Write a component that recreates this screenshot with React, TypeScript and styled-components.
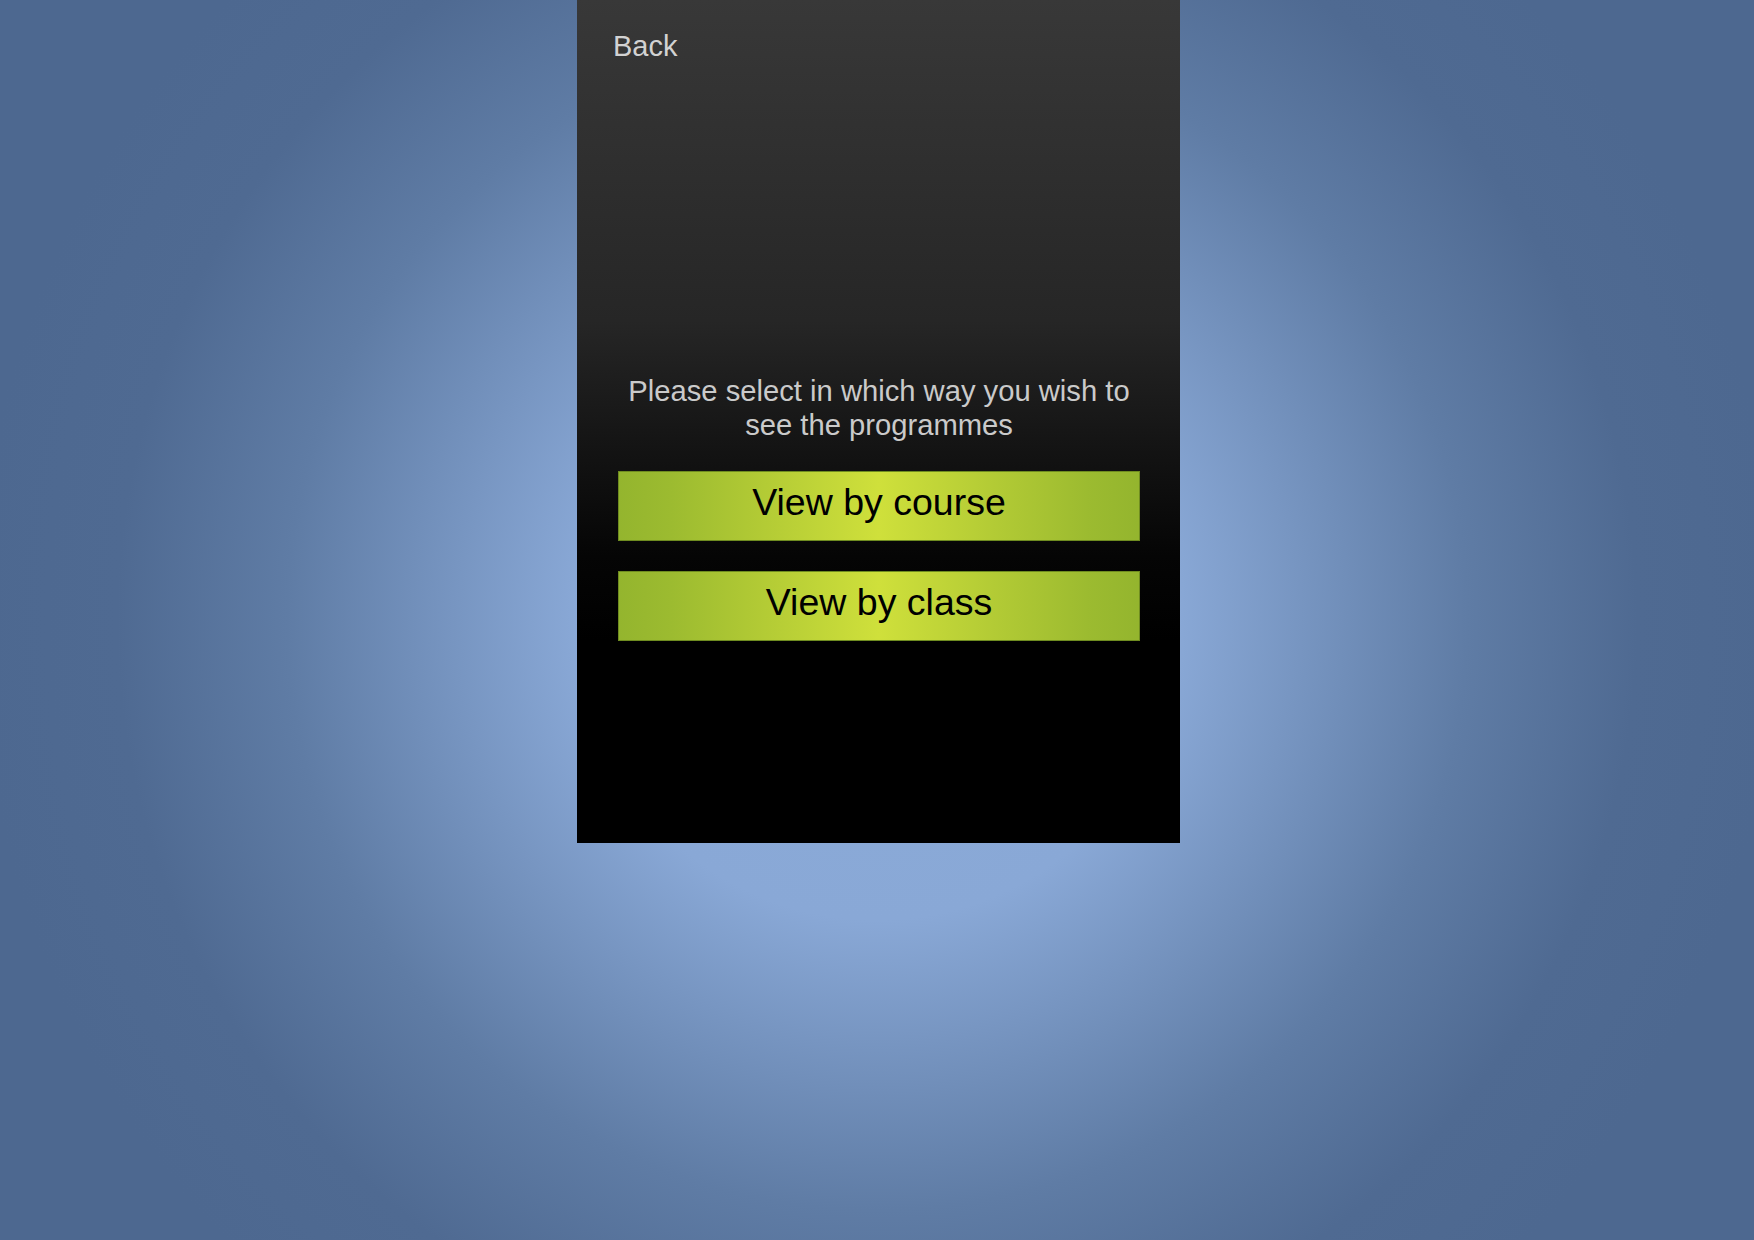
import React from "react";
import styled, { createGlobalStyle } from "styled-components";

const GlobalStyle = createGlobalStyle`
  html, body {
    margin: 0;
    padding: 0;
    height: 100%;
  }
  body {
    font-family: "Liberation Sans", Arial, Helvetica, sans-serif;
  }
  #root {
    min-height: 100vh;
  }
`;

const Page = styled.div`
  min-height: 100vh;
  width: 100%;
  background: radial-gradient(
    circle at 50% 50%,
    #8cacd9 0px,
    #89a8d6 300px,
    #5f7ca5 590px,
    #4f6a92 760px,
    #4d6890 900px
  );
  background-color: #4d6890;
`;

const Panel = styled.div`
  width: 603px;
  height: 843px;
  box-sizing: border-box;
  margin-left: calc(50% - 300px);
  padding: 29px 40px 0 41px;
  display: flex;
  flex-direction: column;
  background: linear-gradient(to bottom, #383838 0%, #262626 38%, #151515 52%, #050505 66%, #000000 76%, #000000 100%);
`;

const BackLink = styled.a`
  align-self: flex-start;
  margin-left: -5px;
  font-size: 29px;
  line-height: 34px;
  color: #d2d2d2;
  text-decoration: none;
  cursor: pointer;
`;

const Prompt = styled.p`
  margin: 311px 0 0;
  font-size: 29.2px;
  line-height: 34px;
  color: #cacaca;
  text-align: center;
`;

const ButtonList = styled.div`
  margin-top: 29px;
  display: flex;
  flex-direction: column;
  gap: 30px;
`;

const ChoiceButton = styled.button`
  height: 70px;
  box-sizing: border-box;
  width: 100%;
  margin: 0;
  padding: 0 0 7px;
  display: flex;
  align-items: center;
  justify-content: center;
  border: 1px solid #6f8c20;
  border-radius: 0;
  background: linear-gradient(
    to right,
    #94b52e 0%,
    #9cbb30 10%,
    #b3cb35 28%,
    #cfe03b 50%,
    #b3cb35 72%,
    #9cbb30 90%,
    #94b52e 100%
  );
  font-family: "Liberation Sans", Arial, Helvetica, sans-serif;
  font-size: 37.5px;
  color: #000;
  cursor: pointer;
`;

export default function App() {
  return (
    <>
      <GlobalStyle />
      <Page>
        <Panel>
          <BackLink>Back</BackLink>
          <Prompt>Please select in which way you wish to see the programmes</Prompt>
          <ButtonList>
            <ChoiceButton>View by course</ChoiceButton>
            <ChoiceButton>View by class</ChoiceButton>
          </ButtonList>
        </Panel>
      </Page>
    </>
  );
}
